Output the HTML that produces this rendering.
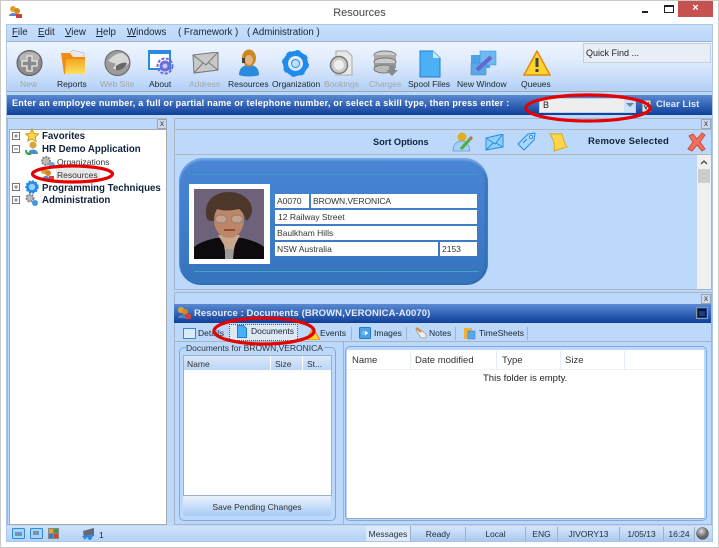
<!DOCTYPE html>
<html><head><meta charset="utf-8"><style>
html,body{margin:0;padding:0;background:#fff}
#r{position:relative;width:719px;height:548px;overflow:hidden;background:#fff;font-family:"Liberation Sans",sans-serif;font-size:8.500px;color:#1a2433;filter:blur(.3px)}
#r div,#r span.a,#r svg{position:absolute}
.t{white-space:nowrap;line-height:12px}
.b{font-weight:bold}
.g{color:#a0a6ae}
.m{font-size:9.700px}
.tr{font-size:9.700px}
u{text-decoration:underline}
.cell{background:#fff;height:14px;line-height:14px;padding-left:2px;white-space:nowrap;color:#333;box-sizing:border-box}
.x{width:10px;height:10px;background:#cdd9e8;border:1px solid #9aa6b5;box-sizing:border-box;font-size:8px;line-height:8px;text-align:center;color:#334}
.sb{height:14px;line-height:14px;text-align:center;background:linear-gradient(#d5e5fa,#a9c9f0);border-right:1px solid #9fb0c6;box-sizing:border-box;color:#25303f}
</style></head><body><div id="r">
<div style="left:0;top:0;width:719px;height:548px;border:1px solid #c9c9c9;box-sizing:border-box"></div>
<div class="t" style="left:0;top:6px;width:719px;text-align:center;font:11px 'Liberation Sans',sans-serif;color:#444;line-height:14px">Resources</div>
<svg style="left:8px;top:5px" width="14" height="14"><circle cx="5" cy="4" r="3" fill="#e0a030"/><circle cx="9" cy="6" r="3" fill="#d08a20"/><path d="M1 11c1-4 7-4 8 0z" fill="#5585c5"/><rect x="8" y="9" width="6" height="4" fill="#d04040"/></svg>
<div style="left:642px;top:11px;width:6px;height:2px;background:#222"></div>
<div style="left:664px;top:5px;width:10px;height:8px;border:1px solid #222;border-top-width:2px;box-sizing:border-box"></div>
<div style="left:678px;top:1px;width:35px;height:16px;background:#c75050;color:#fff;text-align:center;font:bold 11px/15px 'Liberation Sans',sans-serif">×</div>

<div style="left:6px;top:24px;width:707px;height:518px;background:#bcd9fb;border:1px solid #a9c6ea;box-sizing:border-box"></div>
<!-- menu -->
<div style="left:7px;top:25px;width:705px;height:16px;background:linear-gradient(#c9e0fc,#b9d6fa)"></div>
<div class="t m" style="left:12px;top:27px"><u>F</u>ile</div>
<div class="t m" style="left:38px;top:27px"><u>E</u>dit</div>
<div class="t m" style="left:65px;top:27px"><u>V</u>iew</div>
<div class="t m" style="left:96px;top:27px"><u>H</u>elp</div>
<div class="t m" style="left:127px;top:27px"><u>W</u>indows</div>
<div class="t m" style="left:178px;top:27px">( Framework )</div>
<div class="t m" style="left:247px;top:27px">( Administration )</div>
<!-- toolbar -->
<div style="left:7px;top:41px;width:705px;height:51px;background:linear-gradient(#eef5ff 0,#dce9fc 45%,#b3d0f6 100%);border-top:1px solid #a9b4c2;border-bottom:1px solid #9aa6b5;box-sizing:border-box"></div>

<svg style="left:16px;top:50px" width="28" height="28"><circle cx="13.500" cy="13" r="12.500" fill="#8d8d8d" stroke="#5c5c5c"/><ellipse cx="13.500" cy="8" rx="10" ry="6" fill="#b5b5b5"/><path d="M11 6h5v5h5v5h-5v5h-5v-5h-5v-5h5z" fill="#8a8a8a" stroke="#ddd" stroke-width="1.500"/></svg>
<svg style="left:60px;top:49px" width="28" height="28"><defs><linearGradient id="f" x1="0" y1="0" x2="0" y2="1"><stop offset="0" stop-color="#f7a520"/><stop offset="1" stop-color="#fde060"/></linearGradient></defs><path d="M8 6l5-5 11 3v10H8z" fill="#e8e8e8" stroke="#aaa" stroke-width=".5"/><path d="M1 4h9l3 4h12v17H4z" fill="#f08c14"/><path d="M6 10h19v15H5z" fill="url(#f)"/></svg>
<svg style="left:104px;top:50px" width="28" height="28"><circle cx="13.500" cy="13" r="12.500" fill="#9b9b9b" stroke="#666"/><path d="M4 11c5-6 10-8 14-8 5 2 7 6 7 10-4 5-12 9-16 5 3-3 4-5 0-5z" fill="#d8d8d8"/><path d="M12 16c4-3 8-4 11-3-2 5-7 8-11 7z" fill="#666"/></svg>
<svg style="left:148px;top:49px" width="28" height="28"><rect x="1" y="2" width="21" height="18" fill="#fff" stroke="#2b8be0" stroke-width="2"/><rect x="2" y="2" width="20" height="3" fill="#2b8be0"/><circle cx="17" cy="17" r="7.500" fill="none" stroke="#6a6ad8" stroke-width="2" stroke-dasharray="3 1.500"/><circle cx="17" cy="17" r="5.500" fill="#6b6bdc"/><circle cx="17" cy="17" r="2.500" fill="#c8c8f4"/></svg>
<svg style="left:192px;top:52px" width="28" height="24"><path d="M1 3L26 0v18L2 21z" fill="#c9c9c9" stroke="#777"/><path d="M1 3l13 10L26 0M2 21l9-10M26 18l-10-8" fill="none" stroke="#777"/></svg>
<svg style="left:238px;top:49px" width="22" height="28"><path d="M1 26c0-7 4-10 10-10s10 3 10 10c-4 2-16 2-20 0z" fill="#2a8ae0"/><ellipse cx="11" cy="9" rx="7" ry="8.500" fill="#c88a1e"/><ellipse cx="11" cy="11" rx="4" ry="5" fill="#e6b27a"/><rect x="4" y="9" width="3" height="5" fill="#444"/></svg>
<svg style="left:282px;top:50px" width="28" height="28"><circle cx="13.500" cy="13.500" r="10" fill="none" stroke="#1f8cec" stroke-width="5"/><circle cx="13.500" cy="13.500" r="12" fill="none" stroke="#1f8cec" stroke-width="3" stroke-dasharray="4.500 4.900"/><circle cx="13.500" cy="13.500" r="4" fill="#bfe0fb" stroke="#1f8cec"/></svg>
<svg style="left:328px;top:50px" width="26" height="28"><path d="M8 1h11l5 5v19H8z" fill="#e8e8e8" stroke="#aaa"/><circle cx="11" cy="15" r="8.500" fill="#ccc" stroke="#777" stroke-width="1.500"/><circle cx="11" cy="15" r="5" fill="#eee"/></svg>
<svg style="left:372px;top:50px" width="28" height="28"><ellipse cx="13" cy="5" rx="11" ry="4" fill="#ccc" stroke="#777"/><rect x="2" y="5" width="22" height="6" fill="#aaa"/><ellipse cx="13" cy="12" rx="11" ry="4" fill="#ccc" stroke="#777"/><rect x="2" y="13" width="22" height="5" fill="#999"/><ellipse cx="12" cy="19" rx="10" ry="4" fill="#bbb" stroke="#777"/><path d="M17 15h6v5h3l-6 6-6-6h3z" fill="#8a8a8a"/></svg>
<svg style="left:418px;top:50px" width="24" height="28"><path d="M2 1h13l7 7v19H2z" fill="#4bb0f4" stroke="#1d7fd0"/><path d="M15 1v7h7z" fill="#c9e8fc"/></svg>
<svg style="left:470px;top:49px" width="28" height="28"><rect x="1" y="6" width="19" height="13" fill="#4aa3e8"/><rect x="10" y="2" width="16" height="14" fill="#6fb9ee" stroke="#2f8ad6" stroke-width=".5"/><rect x="1" y="14" width="15" height="12" fill="#5aa8e6" stroke="#2f8ad6" stroke-width=".5"/><path d="M7 21L21 8" stroke="#6666cc" stroke-width="4"/></svg>
<svg style="left:523px;top:50px" width="28" height="27"><path d="M14 1L27 25H1z" fill="#fdd42a" stroke="#e08a10" stroke-width="1.500"/><rect x="12.500" y="8" width="3" height="9" fill="#444"/><rect x="12.500" y="19" width="3" height="3" fill="#444"/></svg>

<div class="t g" style="left:20px;top:78px">New</div>
<div class="t" style="left:57px;top:78px">Reports</div>
<div class="t g" style="left:100px;top:78px">Web Site</div>
<div class="t" style="left:149px;top:78px">About</div>
<div class="t g" style="left:189px;top:78px">Address</div>
<div class="t" style="left:228px;top:78px">Resources</div>
<div class="t" style="left:272px;top:78px">Organization</div>
<div class="t g" style="left:324px;top:78px">Bookings</div>
<div class="t g" style="left:369px;top:78px">Charges</div>
<div class="t" style="left:408px;top:78px">Spool Files</div>
<div class="t" style="left:457px;top:78px">New Window</div>
<div class="t" style="left:521px;top:78px">Queues</div>
<div class="t" style="left:583px;top:43px;width:128px;height:20px;background:#e8eef6;border:1px solid #c5cfdb;box-sizing:border-box;padding-left:2px;line-height:19px;font-size:9px;color:#222">Quick Find ...</div>

<!-- blue bar -->
<div style="left:7px;top:95px;width:705px;height:20px;background:linear-gradient(#5a8ad2,#0f3f9a)"></div>
<div class="t b" style="left:12px;top:97px;color:#fff;font-size:9px;letter-spacing:.24px">Enter an employee number, a full or partial name or telephone number, or select a skill type, then press enter :</div>
<div style="left:539px;top:98px;width:97px;height:15px;background:#eee;border:1px solid #bcd2ee;box-sizing:border-box;line-height:13px;padding-left:3px;color:#222;font-size:9px">B</div>
<div style="left:624px;top:99px;width:11px;height:13px;background:#cfe0f5"></div>
<svg style="left:626px;top:103px" width="8" height="5"><path d="M0 0h8L4 4z" fill="#5b86bb"/></svg>
<svg style="left:642px;top:100px" width="9" height="12"><rect width="9" height="12" fill="#dbe3ec" stroke="#55708f"/><path d="M2 5l2 4 3-7" fill="none" stroke="#24466e"/></svg>
<div class="t b" style="left:656px;top:99px;color:#dfeafa;font-size:9.500px">Clear List</div>

<!-- left panel -->
<div style="left:7px;top:118px;width:160px;height:407px;background:#bcd9fb;border:1px solid #a5b6cb;box-sizing:border-box"></div>
<div style="left:9px;top:129px;width:158px;height:396px;background:#fff;border:1px solid #a9a9a9;box-sizing:border-box"></div>
<div class="x" style="left:157px;top:119px">x</div>
<svg style="left:12px;top:132px" width="8" height="74" fill="#fff" stroke="#777"><rect x=".5" y=".5" width="7" height="7"/><rect x=".5" y="13.500" width="7" height="7"/><rect x=".5" y="51.500" width="7" height="7"/><rect x=".5" y="64.500" width="7" height="7"/><path d="M2 4h4M4 2v4M2 17h4M2 55h4M4 53v4M2 68h4M4 66v4"/></svg>
<svg style="left:25px;top:128px" width="14" height="14"><path d="M7 1l2 4.500 4.500.5-3.300 3 1 4.500L7 11l-4.200 2 1-4.500L.5 6 5 5.500z" fill="#fbd64a" stroke="#c9a020"/></svg>
<svg style="left:25px;top:141px" width="14" height="14"><circle cx="8" cy="4" r="3.500" fill="#d9a43a"/><path d="M3 13c0-6 10-6 10 0z" fill="#4a8fd0"/><path d="M1 9c0 4 3 5 5 4" stroke="#3aa040" stroke-width="2" fill="none"/></svg>
<svg style="left:40px;top:155px" width="15" height="13"><circle cx="6" cy="6" r="4" fill="#bbb" stroke="#888" stroke-width="2" stroke-dasharray="2 1"/><circle cx="12" cy="10" r="3" fill="#5aaae8"/></svg>
<svg style="left:40px;top:167px" width="15" height="14"><circle cx="4" cy="4" r="3" fill="#e0a030"/><circle cx="8" cy="6" r="3" fill="#d08a20"/><path d="M2 12c1-4 7-4 8 0z" fill="#5585c5"/><rect x="9" y="9" width="5" height="4" fill="#d04040"/></svg>
<svg style="left:25px;top:180px" width="14" height="14"><circle cx="7" cy="7" r="4.500" fill="#9ccdf5" stroke="#1f8cec" stroke-width="2.500"/><circle cx="7" cy="7" r="6" fill="none" stroke="#1f8cec" stroke-width="1.500" stroke-dasharray="2 1.500"/></svg>
<svg style="left:25px;top:193px" width="14" height="14"><circle cx="5" cy="5" r="3.500" fill="#bbb" stroke="#888" stroke-width="2" stroke-dasharray="2 1"/><circle cx="10" cy="10" r="3" fill="#3a9ae8"/></svg>
<div class="t b tr" style="left:42px;top:131px;color:#10233a">Favorites</div>
<div class="t b tr" style="left:42px;top:144px;color:#10233a">HR Demo Application</div>
<div class="t" style="left:57px;top:156px;color:#333">Organizations</div>
<div style="left:56px;top:168px;width:44px;height:13px;background:#e8e8e8"></div>
<div class="t" style="left:57px;top:169px;color:#333">Resources</div>
<div class="t b tr" style="left:42px;top:183px;color:#10233a">Programming Techniques</div>
<div class="t b tr" style="left:42px;top:195px;color:#10233a">Administration</div>

<!-- upper panel -->
<div style="left:174px;top:118px;width:538px;height:172px;background:#bcd9fb;border:1px solid #a5b6cb;box-sizing:border-box"></div>
<div class="x" style="left:701px;top:119px">x</div>
<div style="left:174px;top:129px;width:538px;height:26px;background:#bcd9fb;border:1px solid #b0b6bd;box-sizing:border-box"></div>
<div class="t b" style="left:373px;top:136px;color:#10233a;font-size:9.200px">Sort Options</div>
<svg style="left:452px;top:132px" width="22" height="20"><circle cx="10" cy="5" r="4.500" fill="#e0b020"/><path d="M1 19c0-7 4-10 9-10 4 0 7 3 8 10z" fill="#a8d0f4" stroke="#5a9ad8" stroke-width=".7"/><path d="M9 17L19 6" stroke="#4cae3c" stroke-width="3"/><path d="M18 7l2-2" stroke="#d06060" stroke-width="3"/></svg>
<svg style="left:485px;top:134px" width="20" height="17"><path d="M1 4l17-4v13L1 16z" fill="#8fd0f8" stroke="#2a8be0"/><path d="M1 4l9 6 8-10M1 16l7-7M18 13l-7-4" fill="none" stroke="#2a8be0"/></svg>
<svg style="left:517px;top:132px" width="20" height="20"><path d="M1 12L11 2l7-1-1 7-10 10z" fill="#a8d8f8" stroke="#2a8be0"/><circle cx="14" cy="5" r="1.500" fill="#fff" stroke="#2a8be0"/><path d="M6 11l4-4" stroke="#2a8be0"/></svg>
<svg style="left:549px;top:133px" width="20" height="19"><path d="M1 1h12c1 5 3 10 5 13l-13 4c1-5 0-11-4-17z" fill="#fbd64a" stroke="#e0a820"/></svg>
<div class="t b" style="left:588px;top:136px;color:#10233a;font-size:9.500px;letter-spacing:.15px">Remove Selected</div>
<svg style="left:687px;top:132px" width="20" height="20"><path d="M2 4l4-2 4 5 5-6 3 2-5 7 5 7-3 2-5-6-5 6-4-2 5-7z" fill="#f07060" stroke="#d04a3a"/></svg>
<!-- scrollbar -->
<div style="left:697px;top:155px;width:14px;height:134px;background:#f0f0f0"></div>
<div style="left:698px;top:169px;width:12px;height:14px;background:#cdcdcd"></div>
<svg style="left:700px;top:160px" width="8" height="5"><path d="M1 4l3-3 3 3" fill="none" stroke="#444" stroke-width="1.300"/></svg>

<!-- card -->
<div style="left:179px;top:158px;width:309px;height:127px;border-radius:24px 24px 22px 22px/24px 24px 22px 22px;background:linear-gradient(#4a86d4,#4080cf 40%,#3573bb);box-shadow:inset 0 2px 2px #7fb0ea,inset -2px 0 2px #2a62a8;overflow:hidden"></div>
<div style="left:192px;top:174px;width:285px;height:1px;background:#3f9cc8"></div>
<div style="left:194px;top:271px;width:285px;height:1px;background:#3fa6c0"></div>
<div style="left:189px;top:184px;width:81px;height:80px;background:#fff"></div>
<svg style="left:194px;top:189px" width="70" height="70"><rect width="70" height="70" fill="#6d6279"/><path d="M0 70V58c6-5 14-7 22-9h26c8 2 16 4 22 9v12z" fill="#0d0b0d"/><path d="M24 46h22l-5 10-3 14h-6l-2-14z" fill="#c9a68e"/><path d="M31 60h9l-1 10h-8z" fill="#9a9a9a"/><ellipse cx="35" cy="31" rx="15" ry="18" fill="#bd8668"/><path d="M13 30C8 13 20 3 35 3c14 0 24 9 23 20-1 4-3 7-6 9-1-5-3-9-7-12-9 2-16 2-22 0-2 3-3 7-3 12-3 0-6 0-7-2z" fill="#4d372b"/><ellipse cx="27" cy="30" rx="6" ry="4" fill="#c9a08a" stroke="#8f8078"/><ellipse cx="43" cy="30" rx="6" ry="4" fill="#c9a08a" stroke="#8f8078"/><path d="M30 41h11" stroke="#94403a" stroke-width="1.800"/></svg>
<div class="cell" style="left:275px;top:194px;width:34px">A0070</div>
<div class="cell" style="left:311px;top:194px;width:166px;letter-spacing:-.1px">BROWN,VERONICA</div>
<div class="cell" style="left:275px;top:210px;width:202px;padding-left:3px">12 Railway Street</div>
<div class="cell" style="left:275px;top:226px;width:202px">Baulkham Hills</div>
<div class="cell" style="left:275px;top:242px;width:163px">NSW Australia</div>
<div class="cell" style="left:440px;top:242px;width:37px">2153</div>

<!-- lower panel -->
<div style="left:174px;top:292px;width:538px;height:233px;background:#bcd9fb;border:1px solid #a5b6cb;box-sizing:border-box"></div>
<div class="x" style="left:701px;top:294px">x</div>
<div style="left:174px;top:304px;width:537px;height:19px;background:linear-gradient(#5a8ad2,#0f3f9a)"></div>
<svg style="left:177px;top:306px" width="14" height="14"><circle cx="4" cy="4" r="3" fill="#e0a030"/><circle cx="8" cy="6" r="3" fill="#d08a20"/><path d="M1 12c1-4 7-4 8 0z" fill="#5585c5"/><rect x="8" y="8" width="6" height="5" fill="#d04040"/></svg>
<div class="t b" style="left:194px;top:308px;color:#e2ecfa;font-size:9.500px;letter-spacing:.07px">Resource : Documents (BROWN,VERONICA-A0070)</div>
<div style="left:696px;top:307px;width:12px;height:12px;border:1px solid #8a97a8;box-sizing:border-box;background:#1b3f85"><div style="left:1px;top:1px;width:8px;height:8px;border:1px solid #04132f;border-top-width:2px;box-sizing:border-box"></div></div>

<svg style="left:183px;top:328px" width="13" height="11"><rect x=".5" y=".5" width="12" height="10" fill="#d9ecfc" stroke="#2a8be0"/></svg>
<div class="t" style="left:198px;top:327px">Details</div>
<div style="left:229px;top:324px;width:69px;height:17px;background:#dde8f5;border:1px dotted #555;box-sizing:border-box"></div>
<svg style="left:237px;top:325px" width="10" height="13"><path d="M.5.500h6l3 3v9h-9z" fill="#4bb0f4" stroke="#1d7fd0"/></svg>
<div class="t" style="left:251px;top:325px">Documents</div>
<svg style="left:306px;top:328px" width="14" height="12"><path d="M7 0l7 12H0z" fill="#fdd42a" stroke="#e08a10"/></svg>
<div class="t" style="left:320px;top:327px">Events</div>
<div style="left:351px;top:327px;width:1px;height:13px;background:#9fb4cc"></div>
<svg style="left:359px;top:327px" width="12" height="12"><rect x=".5" y=".5" width="11" height="11" rx="1" fill="#4aa3e8" stroke="#2a7ac0"/><path d="M4 4v4M6 4l3 2-3 2z" fill="#fff" stroke="#fff" stroke-width=".5"/></svg>
<div class="t" style="left:374px;top:327px">Images</div>
<div style="left:406px;top:327px;width:1px;height:13px;background:#9fb4cc"></div>
<svg style="left:415px;top:327px" width="12" height="12"><path d="M3 1l8 6v4H6L1 3z" fill="#eee" stroke="#aaa"/><path d="M1 1l5 4" stroke="#d88a30" stroke-width="2"/></svg>
<div class="t" style="left:429px;top:327px">Notes</div>
<div style="left:455px;top:327px;width:1px;height:13px;background:#9fb4cc"></div>
<svg style="left:464px;top:327px" width="12" height="13"><rect x="0" y="1" width="8" height="11" fill="#f3b030"/><rect x="4" y="4" width="7" height="8" fill="#58a8e8" stroke="#2a7ac0" stroke-width=".5"/></svg>
<div class="t" style="left:479px;top:327px">TimeSheets</div>
<div style="left:527px;top:327px;width:1px;height:13px;background:#9fb4cc"></div>

<div style="left:174px;top:341px;width:537px;height:1px;background:#a9b3bf"></div>
<div style="left:343px;top:341px;width:1px;height:183px;background:#9fb3cc"></div>
<!-- group -->
<div style="left:179px;top:347px;width:157px;height:174px;border:1px solid #7ea9e0;border-radius:5px;box-sizing:border-box"></div>
<div class="t" style="left:186px;top:342px;background:#bcd9fb;padding:0 1px 0 0;color:#333">Documents for BROWN,VERONICA</div>
<div style="left:183px;top:355px;width:149px;height:141px;background:#fff;border:1px solid #9fb0c6;box-sizing:border-box"></div>
<div style="left:184px;top:356px;width:147px;height:14px;background:linear-gradient(#d9e8fb,#bcd6f6)"></div>
<div style="left:270px;top:356px;width:1px;height:14px;background:#fff"></div>
<div style="left:302px;top:356px;width:1px;height:14px;background:#fff"></div>
<div class="t" style="left:187px;top:358px;color:#333">Name</div>
<div class="t" style="left:275px;top:358px;color:#333">Size</div>
<div class="t" style="left:307px;top:358px;color:#333">St...</div>
<div style="left:183px;top:496px;width:148px;height:20px;background:linear-gradient(#eaf2fe,#a9cbf5);border-radius:2px"></div>
<div class="t" style="left:183px;top:501px;width:148px;text-align:center;color:#333">Save Pending Changes</div>
<!-- explorer -->
<div style="left:345px;top:346px;width:362px;height:175px;border:1px solid #7ea9e0;border-radius:5px;box-sizing:border-box"></div>
<div style="left:347px;top:350px;width:357px;height:168px;background:#fff;border-bottom:1px solid #9ab"></div>
<div style="left:347px;top:351px;width:357px;height:19px;background:#fff;border-bottom:1px solid #eef3f9;box-sizing:border-box"></div>
<div style="left:410px;top:351px;width:1px;height:19px;background:#e2ecf7"></div>
<div style="left:496px;top:351px;width:1px;height:19px;background:#e2ecf7"></div>
<div style="left:560px;top:351px;width:1px;height:19px;background:#e2ecf7"></div>
<div style="left:624px;top:351px;width:1px;height:19px;background:#e2ecf7"></div>
<div class="t" style="left:352px;top:355px;color:#333;font-size:9.500px">Name</div>
<div class="t" style="left:415px;top:355px;color:#333;font-size:9.500px">Date modified</div>
<div class="t" style="left:502px;top:355px;color:#333;font-size:9.500px">Type</div>
<div class="t" style="left:565px;top:355px;color:#333;font-size:9.500px">Size</div>
<div class="t" style="left:483px;top:373px;color:#222;font-size:9.500px">This folder is empty.</div>

<!-- status -->
<div style="left:7px;top:526px;width:705px;height:15px;background:linear-gradient(#cfe2fa,#b4d2f6)"></div>
<svg style="left:12px;top:528px" width="13" height="11"><rect x=".5" y=".5" width="12" height="10" rx="1" fill="#a9d4f6" stroke="#2a8be0"/><path d="M3 5h7M3 7h7" stroke="#357"/></svg>
<svg style="left:30px;top:528px" width="13" height="11"><rect x=".5" y=".5" width="12" height="10" rx="1" fill="#a9d4f6" stroke="#2a8be0"/><path d="M3 4h6M3 6h6" stroke="#357"/></svg>
<svg style="left:48px;top:528px" width="11" height="11"><rect width="11" height="11" fill="#888"/><rect x="1" y="1" width="4" height="4" fill="#e8a030"/><rect x="6" y="1" width="4" height="4" fill="#40a040"/><rect x="1" y="6" width="4" height="4" fill="#3080d0"/><rect x="6" y="6" width="4" height="4" fill="#e04020"/></svg>
<svg style="left:82px;top:528px" width="13" height="13"><path d="M1 3l11-3v8L2 10z" fill="#667"/><path d="M0 8l12-2-3 6H7L5 9 3 12z" fill="#2a8be0"/></svg>
<div class="t" style="left:99px;top:529px">1</div>
<div class="sb" style="left:366px;top:526px;width:45px;height:15px;line-height:16px;background:#dbe9fb">Messages</div>
<div class="sb" style="left:411px;top:527px;width:55px">Ready</div>
<div class="sb" style="left:466px;top:527px;width:60px">Local</div>
<div class="sb" style="left:526px;top:527px;width:32px">ENG</div>
<div class="sb" style="left:558px;top:527px;width:62px">JIVORY13</div>
<div class="sb" style="left:620px;top:527px;width:44px">1/05/13</div>
<div class="sb" style="left:664px;top:527px;width:31px">16:24</div>
<svg style="left:696px;top:527px" width="13" height="13"><defs><radialGradient id="s" cx=".4" cy=".3"><stop offset="0" stop-color="#ddd"/><stop offset="1" stop-color="#666"/></radialGradient></defs><circle cx="6.500" cy="6.500" r="6" fill="url(#s)" stroke="#555" stroke-width=".5"/></svg>

<!-- red ellipses -->
<svg style="left:0;top:0" width="719" height="548" fill="none" stroke="#e60000" stroke-width="3.200">
<ellipse cx="588" cy="108" rx="62" ry="13"/>
<ellipse cx="72.500" cy="174" rx="40" ry="8"/>
<ellipse cx="264" cy="331" rx="50" ry="13"/>
</svg>
</div></body></html>
